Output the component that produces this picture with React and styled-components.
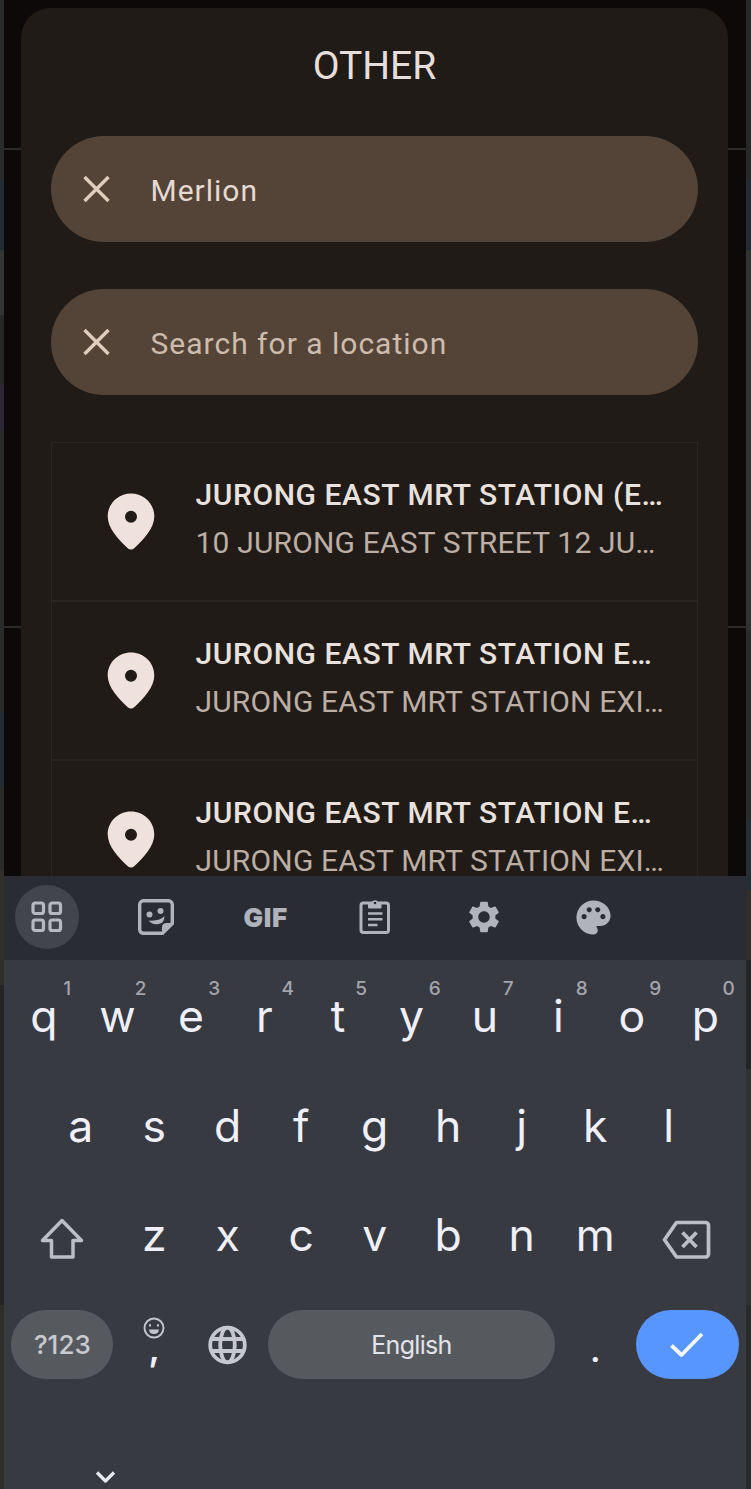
import React from 'react';
import styled, { createGlobalStyle } from 'styled-components';
import { MdSettings, MdPalette } from 'react-icons/md';

const GlobalStyle = createGlobalStyle`
  *, *::before, *::after { box-sizing: border-box; }
  body { margin: 0; background: #292b2b; }
`;

const Screen = styled.div`
  display: grid;
  grid-template-columns: 4px 742px 5px;
  width: 751px;
  height: 1489px;
  overflow: hidden;
  font-family: Roboto, 'Liberation Sans', sans-serif;
`;

const Edge = styled.div`
  background: ${(p) => p.$fill};
`;

const Phone = styled.div`
  display: flex;
  flex-direction: column;
  min-width: 0;
  height: 1489px;
`;

const Backdrop = styled.div`
  height: 876px;
  padding: 8px 18px 0 17px;
  overflow: hidden;
  background:
    linear-gradient(#2b2a2a, #2b2a2a) 0 148px / 100% 2px no-repeat,
    linear-gradient(#2b292b, #2b292b) 0 626px / 100% 2px no-repeat,
    #0c0908;
`;

const Sheet = styled.section`
  height: 920px;
  padding: 0 30px;
  border-radius: 30px 30px 0 0;
  background: #201b17;
`;

const Title = styled.h1`
  margin: 0;
  height: 128px;
  padding-top: 35px;
  text-align: center;
  font-size: 39px;
  line-height: 46px;
  font-weight: 400;
  color: #e6dedb;
`;

const Field = styled.div`
  display: flex;
  align-items: center;
  height: 106px;
  margin-bottom: 47px;
  padding-left: 32px;
  gap: 40.5px;
  border-radius: 53px;
  background: #534437;
`;

const FieldText = styled.span`
  padding-top: 3px;
  font-size: 30px;
  line-height: 36px;
  letter-spacing: 1px;
  color: ${(p) => (p.$placeholder ? '#cdbcae' : '#e6dad2')};
`;

const Results = styled.ul`
  margin: 0;
  padding: 0;
  list-style: none;
  border: 1px solid #292521;
`;

const Result = styled.li`
  display: flex;
  height: 159px;
  padding: 31px 0 0 55px;
  gap: 40.5px;
  border-bottom: 2px solid #292521;
`;

const PinIcon = styled.svg`
  flex: none;
  width: 48px;
  height: 57px;
  margin-top: 18.5px;
`;

const ResultText = styled.div`
  min-width: 0;
  white-space: nowrap;
  font-size: 30px;
`;

const Name = styled.div`
  line-height: 42px;
  font-weight: 500;
  letter-spacing: 0.58px;
  color: #e9e1de;
`;

const Address = styled.div`
  padding-top: 13px;
  line-height: 28px;
  letter-spacing: 0.17px;
  color: #bcaea4;
`;

const Keyboard = styled.section`
  flex: 1;
  background: #383a42;
  font-family: Inter, Roboto, sans-serif;
  color: #eff0fb;
`;

const Toolbar = styled.div`
  display: flex;
  align-items: center;
  gap: 45.3px;
  height: 83.5px;
  padding: 0 0 1.5px 11px;
  background: #2a2c34;
`;

const Tool = styled.div`
  display: flex;
  align-items: center;
  justify-content: center;
  flex: none;
  width: 64px;
  height: 64px;
  border-radius: 50%;
  color: #b0b3bb;
  background: ${(p) => (p.$active ? '#42454b' : 'transparent')};
`;

const GifLabel = styled.span`
  font-size: 26px;
  font-weight: 900;
  letter-spacing: 0.6px;
`;

const Keys = styled.div`
  padding-top: 2px;
`;

const Row = styled.div`
  display: flex;
  justify-content: center;
  height: 109.5px;
  padding: 0 3.8px 0 3.2px;
`;

const Key = styled.div`
  position: relative;
  display: flex;
  align-items: center;
  justify-content: center;
  width: ${(p) => 73.5 * (p.$span || 1)}px;
  font-size: 44.5px;
  line-height: 60px;
  padding-top: ${(p) => p.$drop || 0}px;
`;

const Hint = styled.span`
  position: absolute;
  top: 15px;
  left: 48px;
  width: 24px;
  text-align: center;
  font-size: 19px;
  line-height: 24px;
  font-weight: 500;
  color: #a3a5ad;
`;

const Pill = styled.div`
  display: flex;
  align-items: center;
  justify-content: center;
  width: ${(p) => p.$width}px;
  height: 69px;
  border-radius: 35px;
  font-size: ${(p) => p.$size || 26}px;
  line-height: 34px;
  letter-spacing: ${(p) => p.$tracking || 0}px;
  font-weight: ${(p) => p.$weight || 400};
  color: ${(p) => p.$ink || '#e3e4ea'};
  background: ${(p) => p.$fill || '#565a5f'};
`;

const CommaKey = styled(Key)`
  flex-direction: column;
  justify-content: flex-start;
  padding-top: 27px;
  line-height: 18px;
  font-size: 36px;
  font-weight: 600;
`;

const DotKey = styled(Key)`
  padding-top: 10px;
  font-size: 33px;
  font-weight: 600;
`;

const NavBar = styled.div`
  display: flex;
  padding: 70px 0 0 91px;
`;

const Stroke = ({ w, h, sw = 3, children, color = '#bcbec6' }) => (
  <svg width={w} height={h} viewBox={`0 0 ${w} ${h}`} fill="none" stroke={color}
    strokeWidth={sw} strokeLinejoin="round">{children}</svg>
);

const CloseIcon = () => (
  <Stroke w={27} h={28} sw={3.4} color="#dfcdbd"><path d="M1.5 2 25.5 26M25.5 2 1.5 26" /></Stroke>
);

const Pin = () => (
  <PinIcon viewBox="0 0 48 57">
    <path fill="#efe2dd" fillRule="evenodd" d="M24 .5C11 .5.7 10.7.7 23.5c0 11.500 11 23.500 19.800 31.500 2.200 2 4.800 2 7 0C36.300 47 47.300 35 47.300 23.500 47.300 10.700 37 .5 24 .5Zm0 17.300a6 6 0 1 1 0 12 6 6 0 0 1 0-12Z" />
  </PinIcon>
);

const GridIcon = () => (
  <Stroke w={32} h={32} sw={3.2} color="#b6b9c0">
    {[[2, 2], [19, 2], [2, 19], [19, 19]].map(([x, y]) => (
      <rect key={`${x}-${y}`} x={x} y={y} width="10.500" height="10.500" rx="2.300" />
    ))}
  </Stroke>
);

const StickerIcon = () => (
  <Stroke w={36} h={36} sw={3.4} color="#b0b3bb">
    <path d="M5.500 1.800H30.500a3.800 3.800 0 0 1 3.800 3.800V24.500L24.500 34.300H5.500a3.800 3.800 0 0 1-3.800-3.800V5.600a3.800 3.800 0 0 1 3.800-3.800Z" />
    <path d="M34 24.500H28a3.500 3.500 0 0 0-3.500 3.500v6Z" fill="#b0b3bb" strokeWidth="1" />
    <path d="M10.500 21.500q11 1 16-4.500 0 7-6 8-6.500 1-10-3.500Z" fill="#b0b3bb" stroke="none" />
    <circle cx="11.500" cy="15.500" r="3" fill="#b0b3bb" stroke="none" />
    <circle cx="22.500" cy="12" r="3" fill="#b0b3bb" stroke="none" />
  </Stroke>
);

const ClipboardIcon = () => (
  <Stroke w={32} h={38} color="#b0b3bb">
    <rect x="2" y="5" width="27.500" height="29.500" rx="2.500" />
    <path d="M9 15.500H23.500M9 21.200H23.500M9 27H18.500" strokeWidth="2.500" />
    <path d="M9.500 10V5H12.500a3.800 3.800 0 0 1 7 0H22V10Z" fill="#b0b3bb" strokeWidth="1" />
    <circle cx="16" cy="5" r="1.300" fill="#2a2c34" stroke="none" />
  </Stroke>
);

const ShiftIcon = () => (
  <Stroke w={44} h={42} sw={3.5}><path d="M22 2.500 2.500 22.500H11.500V39H33V22.500H41.500Z" /></Stroke>
);

const BackspaceIcon = () => (
  <Stroke w={50} h={40} sw={3.7}>
    <path d="M14.500 2.500H43.500a3 3 0 0 1 3 3V34a3 3 0 0 1-3 3H14.500L2.500 19.700Z" />
    <path d="M20.500 12.500 34.500 27M34.500 12.500 20.500 27" />
  </Stroke>
);

const GlobeIcon = () => (
  <Stroke w={40} h={40} sw={3.8} color="#c6c8ce">
    <circle cx="19.500" cy="20" r="17.300" />
    <ellipse cx="19.500" cy="20" rx="7.300" ry="17.300" />
    <path d="M3 14H36M3 26H36" />
  </Stroke>
);

const EmojiIcon = () => (
  <Stroke w={22} h={22} sw={1.9} color="#c3c5cb">
    <circle cx="11" cy="11" r="9.500" />
    <path d="M6 12.500H16Q15.500 17 11 17T6 12.500Z" fill="#c3c5cb" stroke="none" />
    <path d="M7 7.200V9.500M15 7.200V9.500" strokeWidth="2" />
  </Stroke>
);

const CheckIcon = () => (
  <Stroke w={36} h={28} sw={3.8} color="#f4f7ff"><path d="M2.500 14.500 12.500 24 33 3" /></Stroke>
);

const ChevronIcon = () => (
  <Stroke w={21} h={14} sw={3.2} color="#e8e9f2"><path d="M2 2.500 10.500 11 19 2.500" /></Stroke>
);

const results = [
  ['JURONG EAST MRT STATION (E…', '10 JURONG EAST STREET 12 JU…'],
  ['JURONG EAST MRT STATION E…', 'JURONG EAST MRT STATION EXI…'],
  ['JURONG EAST MRT STATION E…', 'JURONG EAST MRT STATION EXI…'],
];

const leftEdge = 'linear-gradient(#282a2b 0 180px, #202c30 180px 250px, #323435 250px 315px, #262828 315px 385px, #2b2833 385px 430px, #292b2b 430px 712px, #202b35 712px 785px, #292b2b 785px 870px, #302f2b 870px 985px, #252422 985px 1305px, #302e2b 1305px)';
const rightEdge = 'linear-gradient(#272828 0 180px, #252a35 180px 250px, #303131 250px 630px, #292b2b 630px 820px, #252e33 820px 890px, #332e29 890px 960px, #242424 960px 1069px, #31312f 1069px 1305px, #292929 1305px)';

export default function App() {
  return (
    <Screen>
      <GlobalStyle />
      <Edge $fill={leftEdge} />
      <Phone>
        <Backdrop>
          <Sheet>
            <Title>OTHER</Title>
            <Field>
              <CloseIcon />
              <FieldText>Merlion</FieldText>
            </Field>
            <Field>
              <CloseIcon />
              <FieldText $placeholder>Search for a location</FieldText>
            </Field>
            <Results>
              {results.map(([name, address], i) => (
                <Result key={i}>
                  <Pin />
                  <ResultText>
                    <Name>{name}</Name>
                    <Address>{address}</Address>
                  </ResultText>
                </Result>
              ))}
            </Results>
          </Sheet>
        </Backdrop>
        <Keyboard>
          <Toolbar>
            <Tool $active><GridIcon /></Tool>
            <Tool><StickerIcon /></Tool>
            <Tool><GifLabel>GIF</GifLabel></Tool>
            <Tool><ClipboardIcon /></Tool>
            <Tool><MdSettings size={38} /></Tool>
            <Tool><MdPalette size={41} /></Tool>
          </Toolbar>
          <Keys>
            <Row>
              {[...'qwertyuiop'].map((c, i) => (
                <Key key={c}>{c}<Hint>{(i + 1) % 10}</Hint></Key>
              ))}
            </Row>
            <Row>
              {[...'asdfghjkl'].map((c) => <Key key={c}>{c}</Key>)}
            </Row>
            <Row>
              <Key $span={1.5} $drop={7}><ShiftIcon /></Key>
              {[...'zxcvbnm'].map((c) => <Key key={c}>{c}</Key>)}
              <Key $span={1.5} $drop={9}><BackspaceIcon /></Key>
            </Row>
            <Row>
              <Key $span={1.5}><Pill $width={102} $ink="#c8cad0" $weight={500}>?123</Pill></Key>
              <CommaKey><EmojiIcon />,</CommaKey>
              <Key><GlobeIcon /></Key>
              <Key $span={4}><Pill $width={287} $size={25} $tracking={-0.7}>English</Pill></Key>
              <DotKey>.</DotKey>
              <Key $span={1.5}><Pill $width={103} $fill="#5896ff"><CheckIcon /></Pill></Key>
            </Row>
          </Keys>
          <NavBar><ChevronIcon /></NavBar>
        </Keyboard>
      </Phone>
      <Edge $fill={rightEdge} />
    </Screen>
  );
}
